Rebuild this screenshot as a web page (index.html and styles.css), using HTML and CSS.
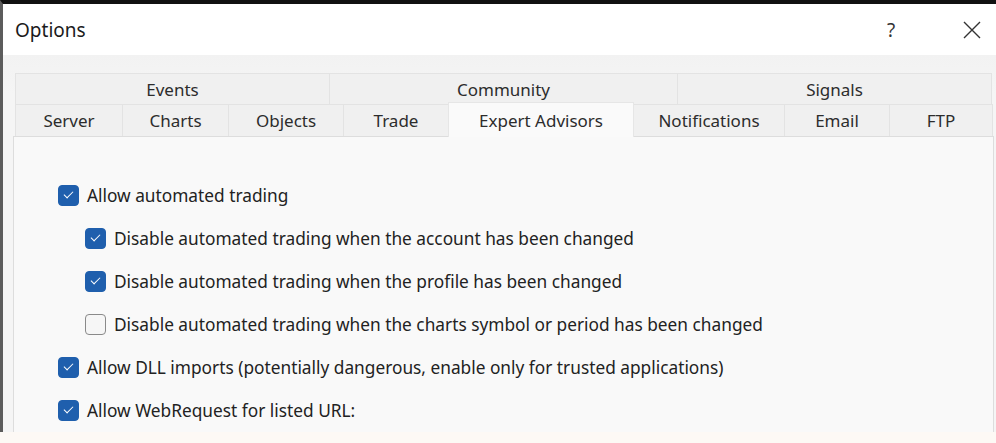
FILE: index.html
```html
<!DOCTYPE html>
<html lang="en">
<head>
    <meta charset="UTF-8">
    <title>Options</title>
    <link rel="stylesheet" href="styles.css">
</head>
<body>
    <div class="window">
        <div class="titlebar">
            <span class="title">Options</span>
            <span class="tb-btn help">?</span>
            <span class="tb-btn close">
                <svg width="18" height="18" viewBox="0 0 18 18"><path d="M1 1 L17 17 M17 1 L1 17" stroke="#333" stroke-width="1.4" fill="none"/></svg>
            </span>
        </div>
        <div class="content">
            <div class="tabs row1">
                <div class="tab">Events</div>
                <div class="tab">Community</div>
                <div class="tab">Signals</div>
            </div>
            <div class="tabs row2">
                <div class="tab">Server</div>
                <div class="tab">Charts</div>
                <div class="tab">Objects</div>
                <div class="tab">Trade</div>
                <div class="tab active">Expert Advisors</div>
                <div class="tab">Notifications</div>
                <div class="tab">Email</div>
                <div class="tab">FTP</div>
            </div>
            <div class="panel">
                <label class="opt"><span class="box on"></span>Allow automated trading</label>
                <label class="opt sub"><span class="box on"></span>Disable automated trading when the account has been changed</label>
                <label class="opt sub"><span class="box on"></span>Disable automated trading when the profile has been changed</label>
                <label class="opt sub"><span class="box"></span>Disable automated trading when the charts symbol or period has been changed</label>
                <label class="opt"><span class="box on"></span>Allow DLL imports (potentially dangerous, enable only for trusted applications)</label>
                <label class="opt"><span class="box on"></span>Allow WebRequest for listed URL:</label>
            </div>
        </div>
    </div>
</body>
</html>
```

FILE: styles.css
```css
html, body {
    margin: 0;
    padding: 0;
    background: #fdf9f5;
    overflow: hidden;
}
body {
    width: 996px;
    height: 443px;
    font-family: 'Noto Sans', Arial, sans-serif;
    color: #222;
}
.window {
    border-top: 4px solid #111;
    border-left: 3px solid #5c5c5c;
    height: 428px;
    background: #f3f3f3;
}
.titlebar {
    height: 51px;
    background: #fff;
    display: flex;
    align-items: center;
    padding-left: 12px;
}
.title {
    font-size: 19px;
    color: #1b1b1b;
    flex: 1;
}
.tb-btn {
    display: flex;
    justify-content: center;
    color: #333;
}
.help {
    font-size: 19px;
    width: 30px;
    margin-right: 57px;
}
.close {
    width: 18px;
    margin-right: 15px;
}
.content {
    padding: 18px 0 0 10px;
    background: linear-gradient(#f2f2f2, #f5f5f5 40px);
}
.tabs {
    display: grid;
    margin-left: 2px;
    width: 976px;
    height: 31px;
}
.row1 {
    grid-template-columns: 314px 348px 314px;
}
.row2 {
    grid-template-columns: 107px 106px 115px 105px 185px 151px 105px 103px;
    height: 32px;
}
.tab {
    display: flex;
    align-items: center;
    justify-content: center;
    font-size: 17px;
    color: #2c2c2c;
    background: #f0f0f0;
    border: 1px solid #e3e3e3;
    border-bottom: none;
    margin-right: -1px;
}
.tab.active {
    background: #fafafa;
    margin-top: -2px;
    margin-bottom: -1px;
    position: relative;
    z-index: 1;
    border-color: #e6e6e6;
}
.panel {
    width: 981px;
    height: 296px;
    background: #f9f9f9;
    border: 1px solid #dddddd;
    border-bottom: none;
    padding: 37px 0 0 44px;
    box-sizing: border-box;
}
.opt {
    display: flex;
    align-items: center;
    height: 43px;
    font-size: 17.3px;
    color: #222;
}
.opt.sub {
    padding-left: 27px;
}
.box {
    width: 21px;
    height: 21px;
    border-radius: 4px;
    box-sizing: border-box;
    border: 1.5px solid #8a8a8a;
    background: #f6f6f6;
    margin-right: 8px;
    flex: none;
    position: relative;
}
.box.on {
    background: #1f5fad;
    border-color: #1f5fad;
}
.box.on::after {
    content: "";
    position: absolute;
    left: 5px;
    top: 3px;
    width: 8px;
    height: 4px;
    border-left: 1.5px solid #fff;
    border-bottom: 1.5px solid #fff;
    transform: translate(0, 2px) rotate(-45deg);
}
```
